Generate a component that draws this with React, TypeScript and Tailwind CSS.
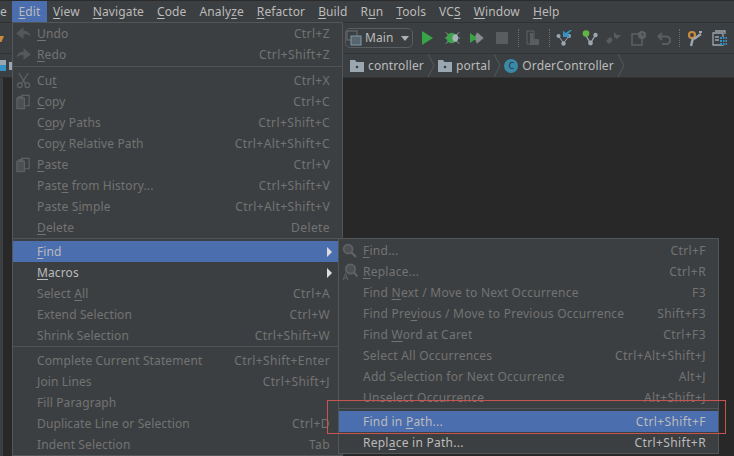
import type { ReactNode } from 'react'

const FONT = "font-['Noto_Sans',sans-serif]"

// "_" goes in front of the mnemonic letter
function Label({ text }: { text: string }) {
  const i = text.indexOf('_')
  if (i < 0) return <span>{text}</span>
  return (
    <span>
      {text.slice(0, i)}
      <span className="underline underline-offset-2">{text[i + 1]}</span>
      {text.slice(i + 2)}
    </span>
  )
}

type Item = {
  label?: string
  keys?: string
  icon?: ReactNode
  active?: boolean
  enabled?: boolean
  arrow?: boolean
  sep?: string
}

const UndoIcon = ({ flip }: { flip?: boolean }) => (
  <svg width="15" height="13" viewBox="0 0 16 14" className={flip ? '-scale-x-100' : ''}>
    <path d="M0 7 L8 0 V4 C12 4 15 6 15.5 10 C13 8 11 7.5 8 8 V13 Z" fill="#55585a" />
  </svg>
)

const ScissorsIcon = () => (
  <svg width="15" height="17" viewBox="0 0 16 18" fill="none" stroke="#5f6264" strokeWidth="1.3">
    <path d="M3 1 L10 12 M13 1 L6 12" />
    <circle cx="4" cy="14" r="2.5" />
    <circle cx="12" cy="14" r="2.5" />
  </svg>
)

const CopyIcon = () => (
  <svg width="15" height="16" viewBox="0 0 16 16" fill="none" stroke="#5f6264" strokeWidth="1.3">
    <rect x="1" y="4" width="8" height="11" fill="#4d5052" />
    <path d="M6 4 V1 H14 V12 H9" />
    <path d="M3 4 V2.5 H7 V4" fill="#5f6264" />
  </svg>
)

const SearchIcon = () => (
  <svg width="15" height="15" viewBox="0 0 16 16" fill="none" stroke="#5f6264">
    <circle cx="6.5" cy="6.5" r="4.8" strokeWidth="1.8" fill="#4d5052" />
    <path d="M10 10 L15 15" strokeWidth="2.4" />
  </svg>
)

const ReplaceIcon = () => (
  <svg width="16" height="18" viewBox="0 0 16 18" fill="none" stroke="#5f6264">
    <circle cx="8.5" cy="6" r="4.6" strokeWidth="1.8" fill="#4d5052" />
    <path d="M12 9.5 L15.5 13.5" strokeWidth="2.2" />
    <path d="M1 17 L3.5 10.5 L6 17 M2 15 H5" strokeWidth="1" />
  </svg>
)

const editItems: Item[] = [
  { label: '_Undo', keys: 'Ctrl+Z', icon: <UndoIcon /> },
  { label: '_Redo', keys: 'Ctrl+Shift+Z', icon: <UndoIcon flip /> },
  { sep: 'mt-px mb-[3px]' },
  { label: 'Cu_t', keys: 'Ctrl+X', icon: <ScissorsIcon /> },
  { label: '_Copy', keys: 'Ctrl+C', icon: <CopyIcon /> },
  { label: 'C_opy Paths', keys: 'Ctrl+Shift+C' },
  { label: 'Cop_y Relative Path', keys: 'Ctrl+Alt+Shift+C' },
  { label: '_Paste', keys: 'Ctrl+V', icon: <CopyIcon /> },
  { label: 'Past_e from History...', keys: 'Ctrl+Shift+V' },
  { label: 'Paste S_imple', keys: 'Ctrl+Alt+Shift+V' },
  { label: '_Delete', keys: 'Delete' },
  { sep: 'mb-[2px]' },
  { label: '_Find', active: true, enabled: true, arrow: true },
  { label: '_Macros', enabled: true, arrow: true },
  { label: 'Select _All', keys: 'Ctrl+A' },
  { label: 'Extend Selection', keys: 'Ctrl+W' },
  { label: 'Shrink Selection', keys: 'Ctrl+Shift+W' },
  { sep: 'mb-[3px]' },
  { label: 'Complete Current Statement', keys: 'Ctrl+Shift+Enter' },
  { label: 'Join Lines', keys: 'Ctrl+Shift+J' },
  { label: 'Fill Paragraph' },
  { label: 'Duplicate Line or Selection', keys: 'Ctrl+D' },
  { label: 'Indent Selection', keys: 'Tab' },
]

const findItems: Item[] = [
  { label: '_Find...', keys: 'Ctrl+F', icon: <SearchIcon /> },
  { label: '_Replace...', keys: 'Ctrl+R', icon: <ReplaceIcon /> },
  { label: 'Find _Next / Move to Next Occurrence', keys: 'F3' },
  { label: 'Find Pre_vious / Move to Previous Occurrence', keys: 'Shift+F3' },
  { label: 'Find _Word at Caret', keys: 'Ctrl+F3' },
  { label: 'Select All Occurrences', keys: 'Ctrl+Alt+Shift+J' },
  { label: 'Add Selection for Next Occurrence', keys: 'Alt+J' },
  { label: 'Unselect Occurrence', keys: 'Alt+Shift+J' },
  { sep: 'mb-[2px]' },
  { label: 'Find in _Path...', keys: 'Ctrl+Shift+F', active: true, enabled: true },
  { label: 'Repl_ace in Path...', keys: 'Ctrl+Shift+R', enabled: true },
]

function Row({ item }: { item: Item }) {
  if (item.sep) return <div className={`h-px bg-[#505354] ${item.sep}`} />
  const color = item.enabled ? 'text-[#bbbbbb]' : 'text-[#737373]'
  return (
    <div className={`flex h-[21px] items-center pr-3 ${color} ${item.active ? 'bg-[#4b6eaf]' : ''}`}>
      <div className="flex w-6 shrink-0 items-center pl-[3px]">{item.icon}</div>
      <Label text={item.label ?? ''} />
      <div className="ml-auto tracking-[0.4px]">{item.keys}</div>
      {item.arrow && <div className="-mr-[2px] h-0 w-0 border-y-[5px] border-l-[5px] border-y-transparent border-l-[#dddddd]" />}
    </div>
  )
}

function Menu({ items, className }: { items: Item[]; className: string }) {
  return (
    <div className={`absolute border border-[#515658] bg-[#3c3f41] text-[12px] ${className}`}>
      {items.map((item, i) => (
        <Row key={i} item={item} />
      ))}
    </div>
  )
}

const menus = ['_View', '_Navigate', '_Code', 'Analy_ze', '_Refactor', '_Build', 'R_un', '_Tools', 'VC_S', '_Window', '_Help']

function Crumb({ label, icon }: { label: string; icon: ReactNode }) {
  return (
    <div className="flex items-center gap-1">
      {icon}
      <span>{label}</span>
      <svg width="7" height="23" viewBox="0 0 7 23" fill="none" stroke="#55585a">
        <path d="M0 0 L6 11.5 L0 23" />
      </svg>
    </div>
  )
}

const FolderIcon = () => (
  <svg width="14" height="12" viewBox="0 0 14 12">
    <path d="M0 0 H5 L6.5 2 H14 V12 H0 Z" fill="#9aa7b0" />
    <circle cx="7" cy="7" r="1.3" fill="#3c3f41" />
  </svg>
)

function Toolbar() {
  return (
    <div className="flex h-[30px] items-center text-[#bbbbbb]">
      <svg width="4" height="8" viewBox="0 0 4 8">
        <path d="M0 2 H4 L1.5 8 H0 Z" fill="#c98a3d" />
      </svg>
      <div className="ml-[341px] flex h-[20px] w-[68px] items-center gap-[3px] rounded-[5px] border border-[#5a5d5f]">
        <svg width="16" height="16" viewBox="0 0 16 16" fill="none">
          <rect x="1" y="1" width="10" height="9" stroke="#6e7274" />
          <rect x="5" y="6" width="10" height="9" fill="#56646d" stroke="#7f9bab" />
        </svg>
        <span>Main</span>
        <div className="ml-[4px] h-0 w-0 border-x-[4.5px] border-t-[5px] border-x-transparent border-t-[#afb1b3]" />
      </div>
      <svg className="ml-[8px]" width="13" height="16" viewBox="0 0 13 16">
        <path d="M1 1 L12 8 L1 15 Z" fill="#37a545" />
      </svg>
      <svg className="ml-[11px]" width="15" height="16" viewBox="0 0 16 16">
        <path d="M1 2 L4 5 M1 14 L4 11 M15 2 L12 5 M15 14 L12 11 M0 8 H16" stroke="#9aa7b0" />
        <ellipse cx="7" cy="8" rx="5.5" ry="5.5" fill="#3da44b" />
        <ellipse cx="11" cy="8" rx="3" ry="4" fill="#aab4bb" />
      </svg>
      <svg className="ml-[10px]" width="15" height="14" viewBox="0 0 15 14">
        <path d="M7 1 L14 7 L7 13 L4 7 Z" fill="#8a8d8f" strokeDasharray="1 1" stroke="#3c3f41" />
        <path d="M0 2 L7 7 L0 12 Z" fill="#37a545" />
      </svg>
      <div className="ml-[11px] h-3 w-3 bg-[#5a5d5f]" />
      <div className="ml-[10px] h-[18px] border-l border-dotted border-[#6a6d6f]" />
      <svg className="ml-[7px]" width="15" height="16" viewBox="0 0 15 16" fill="none">
        <path d="M1 1 H8 V14 H1 Z" stroke="#5f6264" />
        <path d="M4 3 H7 V9 H13 V15 H4 Z" fill="#5a5d5f" />
      </svg>
      <div className="ml-[8px] h-[18px] border-l border-dotted border-[#6a6d6f]" />
      <svg className="ml-[6px]" width="17" height="16" viewBox="0 0 17 16">
        <circle cx="2.5" cy="6" r="2" fill="#9aa7b0" />
        <circle cx="13" cy="6" r="2" fill="#9aa7b0" />
        <circle cx="7.5" cy="13.5" r="2.2" fill="#9aa7b0" />
        <path d="M2.5 6 L7.5 13 L13 6" stroke="#9aa7b0" fill="none" />
        <path d="M16 0 L12 4 L14 7 H7 V0.5 L9.5 3 L14 0 Z" fill="#3592c4" />
      </svg>
      <svg className="ml-[9px]" width="17" height="16" viewBox="0 0 16 16">
        <path d="M3 5 L8 13 L13 5" stroke="#9aa7b0" strokeWidth="1.3" fill="none" />
        <circle cx="3.5" cy="3.5" r="3.3" fill="#62b543" />
        <circle cx="13" cy="5" r="2.2" fill="#9aa7b0" />
        <circle cx="8" cy="13" r="2.4" fill="#9aa7b0" />
      </svg>
      <svg className="ml-[7px]" width="15" height="13" viewBox="0 0 15 13">
        <path d="M8 0 L11 3 L15 3 L11 7 L8 5 Z M0 9 L4 5 L7 8 L3 12 Z" fill="#5a5d5f" />
      </svg>
      <svg className="ml-[10px]" width="16" height="15" viewBox="0 0 16 15" fill="none">
        <rect x="1" y="3" width="10" height="11" stroke="#5f6264" strokeWidth="1.4" />
        <circle cx="11" cy="4" r="4" fill="#5f6264" />
        <path d="M11 2 V4 H13" stroke="#3c3f41" />
      </svg>
      <svg className="ml-[10px]" width="14" height="13" viewBox="0 0 14 13" fill="none" stroke="#5a5d5f" strokeWidth="2">
        <path d="M5 1 L1.5 4.5 L5 8 M2 4.5 H9 C15 4.5 14 12 9 12 H5" />
      </svg>
      <div className="ml-[8px] h-[18px] border-l border-dotted border-[#6a6d6f]" />
      <svg className="ml-[7px]" width="16" height="17" viewBox="0 0 16 17" fill="none">
        <circle cx="5" cy="5" r="3" stroke="#c98a3d" strokeWidth="2.2" />
        <path d="M6 8 L4 16" stroke="#9aa7b0" strokeWidth="2.4" />
        <path d="M7 9 L14 4 M15 2 L12 2" stroke="#9aa7b0" strokeWidth="2.2" />
      </svg>
      <svg className="ml-[9px]" width="16" height="16" viewBox="0 0 16 16" fill="none">
        <path d="M1 3 H11 V15 H1 Z M3 1 H13 V4" stroke="#9aa7b0" strokeWidth="1.3" />
        <path d="M3 7 H7 M3 10 H7" stroke="#9aa7b0" strokeWidth="1.3" />
        <path d="M8 7 H15 V15 H8 Z" fill="#3592c4" />
        <path d="M8 9.5 H15 M8 12.5 H15 M10.5 7 V15 M13 7 V15" stroke="#3c3f41" />
      </svg>
    </div>
  )
}

export default function App() {
  return (
    <div className={`relative flex h-[456px] w-[734px] flex-col overflow-hidden bg-[#3c3f41] text-[12px] tracking-[0.12px] ${FONT}`}>
      <div className="flex h-[22px] items-center border-t border-[#2b2b2b] text-[#bbbbbb]">
        <span className="w-[12px]">e</span>
        <div className="flex h-full w-[35px] items-center justify-center bg-[#4b6eaf]">
          <Label text="_Edit" />
        </div>
        <div className="ml-[6px] flex gap-[13px]">
          {menus.map((m) => (
            <Label key={m} text={m} />
          ))}
        </div>
      </div>
      <div className="border-t border-[#323232]">
        <Toolbar />
      </div>
      <div className="flex h-[25px] items-center gap-[3px] border-y border-[#323232] text-[#bbbbbb]">
        <svg width="12" height="12" viewBox="0 0 12 12">
          <path d="M0 0 H6 V8 H0 Z" fill="#9aa7b0" />
          <path d="M0 5 H6 V11 H0 Z" fill="#3592c4" />
          <path d="M9 2 H12 V10 H9 Z" fill="#9aa7b0" />
        </svg>
        <div className="ml-[335px] flex items-center gap-[3px]">
          <Crumb label="controller" icon={<FolderIcon />} />
          <Crumb label="portal" icon={<FolderIcon />} />
          <Crumb
            label="OrderController"
            icon={
              <div className="flex h-[14px] w-[14px] items-center justify-center rounded-full bg-[#3b89a8] text-[9px] leading-none text-[#2b2b2b]">
                C
              </div>
            }
          />
        </div>
      </div>
      <div className="ml-[3px] flex-1 bg-[#282828]" />

      {/* the two open menus lie over the window */}
      <Menu items={editItems} className="left-[12px] top-[22px] w-[331px] tracking-[0.12px]" />
      <Menu items={findItems} className="left-[338px] top-[238px] w-[381px] pt-px tracking-[0.25px]" />
      <div className="absolute left-[327px] top-[400px] h-[34px] w-[399px] border border-[#c75450]" />
    </div>
  )
}
